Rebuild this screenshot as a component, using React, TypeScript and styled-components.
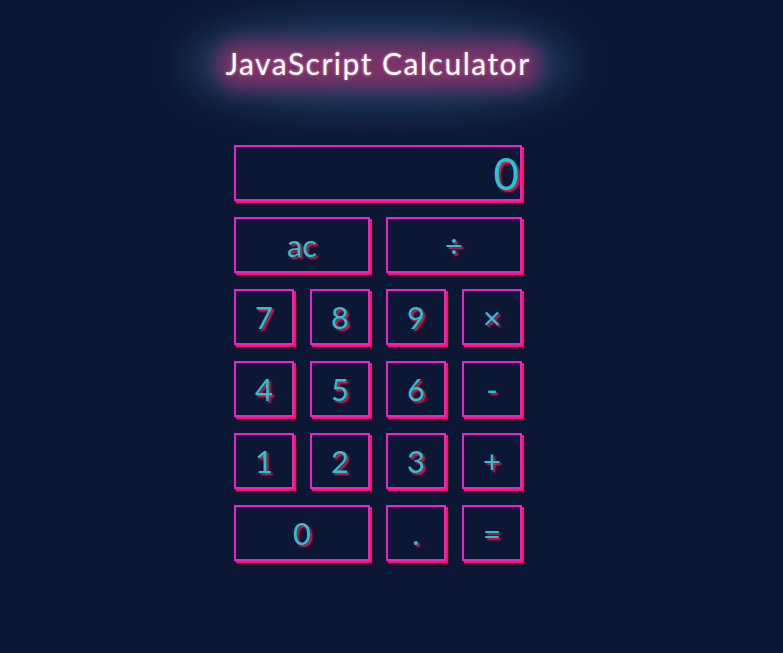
import React from "react";
import styled, { createGlobalStyle } from "styled-components";

const Global = createGlobalStyle`
  html, body { margin: 0; padding: 0; background: #0c1833; }
  body { font-family: "Lato", "Noto Sans", sans-serif; min-height: 653px; }
`;

const Page = styled.div`
  width: 756px;
  display: flex;
  flex-direction: column;
  align-items: center;
  padding-top: 44px;
`;

const Title = styled.h1`
  position: relative;
  isolation: isolate;
  margin: 0;
  font-size: 30px;
  font-weight: 400;
  color: #ffffff;
  letter-spacing: 1.5px;
  line-height: 38px;
  text-shadow: 0 0 3px rgba(255, 200, 230, 0.6);

  &::before {
    content: "";
    position: absolute;
    left: -36px;
    right: -40px;
    top: -24px;
    bottom: -26px;
    z-index: -2;
    border-radius: 45%;
    background: rgba(38, 72, 115, 0.8);
    filter: blur(20px);
  }

  &::after {
    content: "";
    position: absolute;
    left: -8px;
    right: -8px;
    top: -2px;
    bottom: -6px;
    z-index: -1;
    border-radius: 20px;
    background: rgba(140, 48, 105, 0.85);
    filter: blur(10px);
  }
`;

const Grid = styled.div`
  margin-top: 63px;
  display: grid;
  grid-template-columns: repeat(4, 60px);
  grid-auto-rows: 56px;
  gap: 16px;
`;

const Box = styled.div<{ $span?: number }>`
  box-sizing: border-box;
  grid-column: span ${(p) => p.$span ?? 1};
  border: 2px solid #ee1fd2;
  box-shadow: 2px 2px 0 #ff1450;
  background: transparent;
  color: #27c3cf;
  text-shadow: 2px 2px 2px #ff1450;
  display: flex;
  align-items: center;
`;

const Display = styled(Box)`
  justify-content: flex-end;
  padding-right: 1px;
  font-size: 44px;
`;

const Key = styled(Box)`
  justify-content: center;
  font-size: 31px;
  cursor: pointer;
`;

const keys: { label: string; span?: number }[] = [
  { label: "ac", span: 2 },
  { label: "÷", span: 2 },
  { label: "7" },
  { label: "8" },
  { label: "9" },
  { label: "×" },
  { label: "4" },
  { label: "5" },
  { label: "6" },
  { label: "-" },
  { label: "1" },
  { label: "2" },
  { label: "3" },
  { label: "+" },
  { label: "0", span: 2 },
  { label: "." },
  { label: "=" },
];

export default function App() {
  return (
    <>
      <Global />
      <Page>
        <Title>JavaScript Calculator</Title>
        <Grid>
          <Display $span={4}>0</Display>
          {keys.map((k, i) => (
            <Key key={i} $span={k.span}>
              {k.label}
            </Key>
          ))}
        </Grid>
      </Page>
    </>
  );
}
